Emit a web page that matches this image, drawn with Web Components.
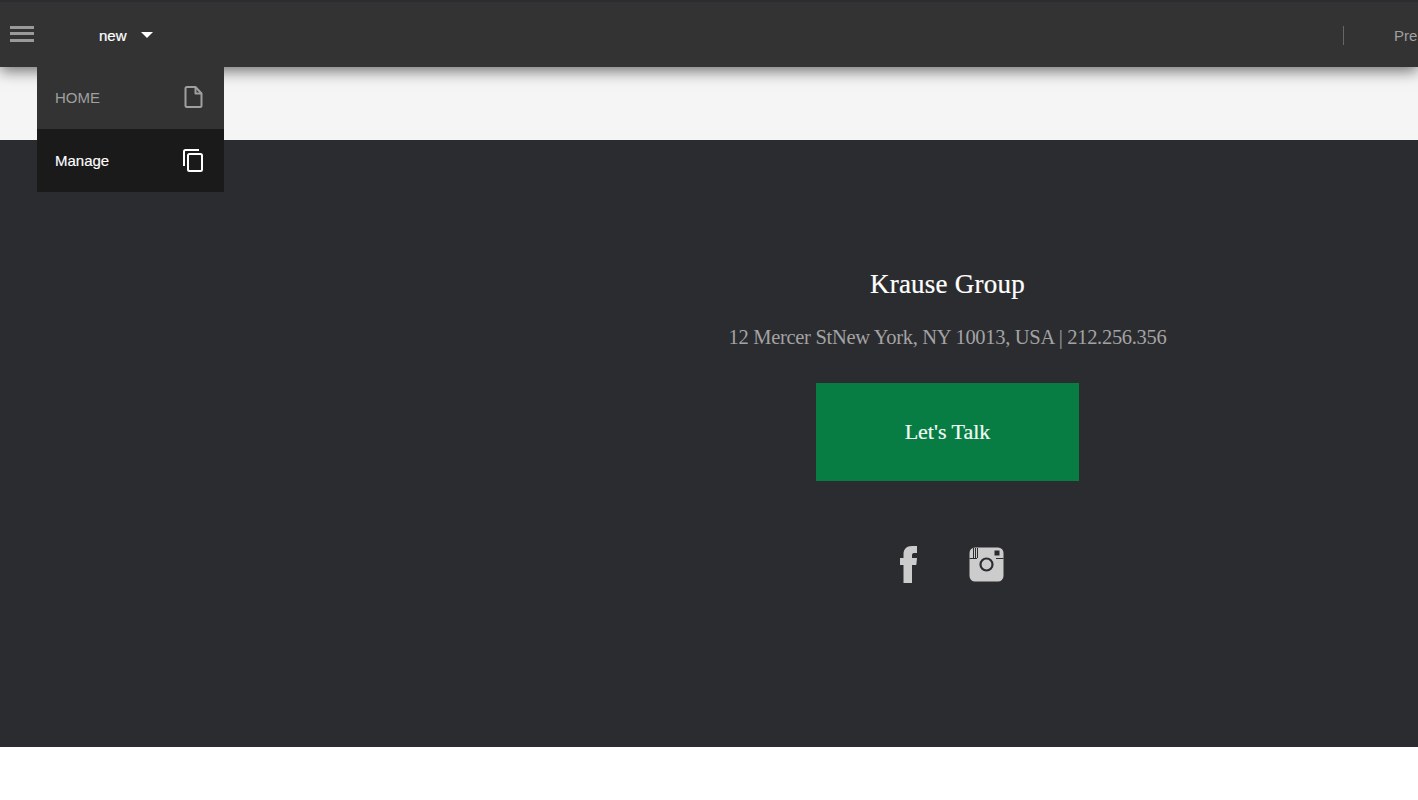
<!DOCTYPE html>
<html><head><meta charset="utf-8"><style>
html,body{margin:0;padding:0;background:#fff;overflow:hidden}
body{font-family:"Liberation Sans",Arial,sans-serif;height:800px}
</style></head><body>
<app-topbar></app-topbar>
<app-band></app-band>
<site-footer></site-footer>
<script>
function def(name,html){customElements.define(name,class extends HTMLElement{constructor(){super();this.attachShadow({mode:'open'}).innerHTML=html}})}
def('app-menu',`<style>
:host{display:block;position:absolute;left:37px;top:65px;width:187px;z-index:5;font-size:15px}
.r{display:flex;align-items:center;justify-content:space-between;box-sizing:border-box;padding:0 19px 0 18px}
.a{height:62px;background:#333;color:#a0a0a0}
.a span{margin-top:-2px}
.b{height:63px;background:#1a1a1a;color:#fff}
.b span{-webkit-text-stroke:.15px #fff}
svg{display:block;margin-top:-2px}
</style>
<div class="r a"><span>HOME</span><svg width="22" height="24" viewBox="0 0 22 24" fill="none" stroke="#a0a0a0" stroke-width="2" stroke-linejoin="round"><path d="M2.500 3.500a1.500 1.500 0 0 1 1.500-1.500H12.500l6 6.500V20.500a1.500 1.500 0 0 1-1.500 1.500H4A1.500 1.500 0 0 1 2.500 20.500Z"/><path d="M12.500 2v6.500h6"/></svg></div>
<div class="r b"><span>Manage</span><svg width="24" height="24" viewBox="0 0 24 24" fill="none" stroke="#fff" stroke-width="2"><path d="M18 2H4.500A1.500 1.500 0 0 0 3 3.500V18"/><rect x="7" y="6" width="14" height="17" rx="1.500"/></svg></div>`);
def('app-topbar',`<style>
:host{display:block;position:relative;z-index:3;height:67px;box-sizing:border-box;background:#333;border-top:2px solid #2a2c2f;box-shadow:0 4px 14px rgba(0,0,0,.55);color:#fff}
.bar{display:flex;align-items:center;height:65px;box-sizing:border-box;overflow:hidden}
.ham{margin-left:10px;width:24px;height:16px;display:flex;flex-direction:column;justify-content:space-between;margin-top:1px;margin-bottom:3px;box-sizing:border-box}
.ham i{display:block;height:3px;background:#9a9a9a}
.new{margin-left:65px;font-size:15px;margin-top:1px;font-weight:400;-webkit-text-stroke:.2px #fff}
.car{margin-left:14px;width:0;height:0;border:6.500px solid transparent;border-top:6.500px solid #fff;border-bottom:0;margin-top:1px}
.sp{flex:1}
.div{width:1px;height:19px;background:#666;margin:2px 50px 0 0;flex:none}
.pre{font-size:15px;color:#a0a0a0;width:24px;white-space:nowrap;margin-top:1px}
</style><div class="bar"><div class="ham"><i></i><i></i><i></i></div><span class="new">new</span><span class="car"></span><span class="sp"></span><span class="div"></span><span class="pre">Pre</span></div><app-menu></app-menu>`);
def('app-band',`<style>:host{display:block;height:73px;background:#f5f5f5}</style>`);
def('site-footer',`<style>
:host{display:flex;flex-direction:column;align-items:center;box-sizing:border-box;height:607px;background:#2b2c30;padding:128px 0 0 477px;font-family:"Liberation Serif",serif}
h2{margin:0;font-weight:400;font-size:27px;line-height:32px;color:#fff;letter-spacing:.25px;-webkit-text-stroke:.2px #fff}
p{margin:24px 0 0;font-size:20.500px;line-height:26px;color:#a3a3a3;letter-spacing:-.3px;white-space:nowrap}
a{display:flex;align-items:center;justify-content:center;margin-top:33px;width:263px;height:98px;background:#077d44;color:#f2fbf6;font-size:22px;letter-spacing:0;-webkit-text-stroke:.2px #f2fbf6}
.s{display:flex;align-items:center;gap:51px;margin-top:65px;margin-left:9px}
svg{display:block}
</style>
<h2>Krause Group</h2>
<p>12 Mercer StNew York, NY 10013, USA | 212.256.356</p>
<a>Let's Talk</a>
<div class="s">
<svg width="18" height="37" viewBox="0 0 18 37"><path fill="#ccc" d="M3.500 37V19H0V12H3.500V8.500C3.500 3 6.500 0 12 0H17V7H14C12.500 7 12 8 12 9.500V12H17L16.300 19H12V37Z"/></svg>
<svg width="36" height="35" viewBox="0 0 36 35"><path fill="#ccc" fill-rule="evenodd" d="M6 .5H29a5.500 5.500 0 0 1 5.500 5.500V29a5.500 5.500 0 0 1-5.500 5.500H6A5.500 5.500 0 0 1 .5 29V6A5.500 5.500 0 0 1 6 .5ZM25.500 3.500v5h5v-5Z"/><path stroke="#2b2c30" stroke-width="1" fill="none" d="M.5 11.500H8M27 11.500H34.500M4.500 1v10M6.500 1v10M8.500 1v10"/><circle cx="17.500" cy="17.500" r="9" fill="#ccc"/><circle cx="17.500" cy="17.500" r="6" fill="none" stroke="#2b2c30" stroke-width="2.200"/></svg>
</div>`);
</script>
</body></html>
